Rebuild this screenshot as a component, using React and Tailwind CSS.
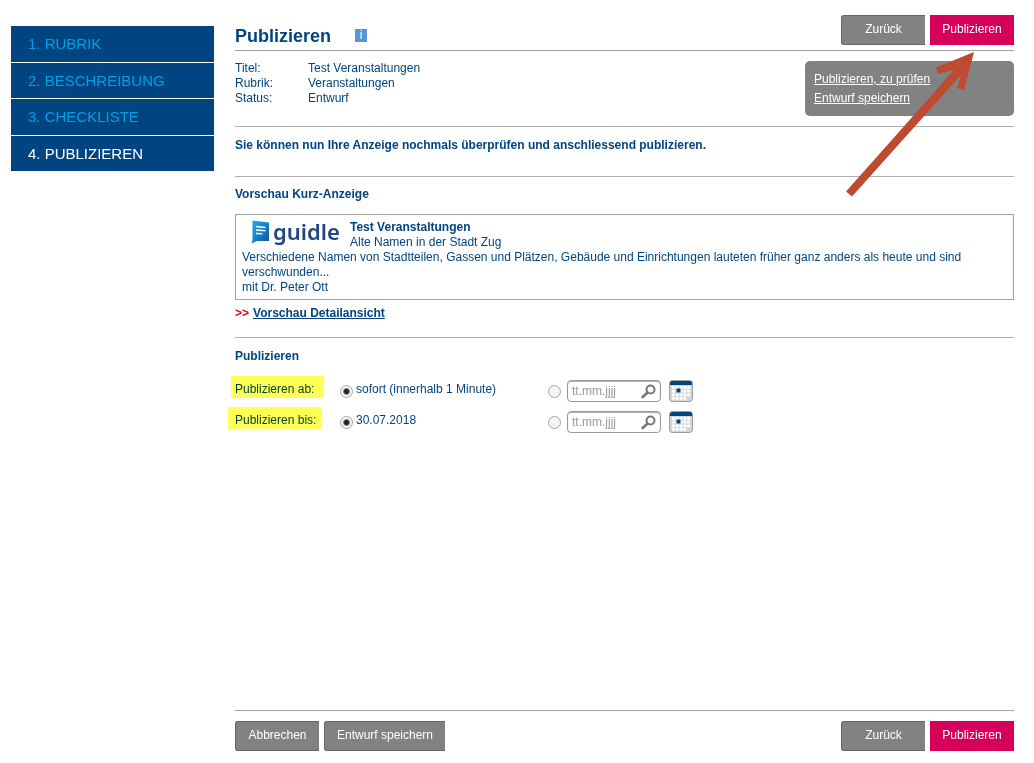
import { useState } from 'react'

const STEPS = ['1. RUBRIK', '2. BESCHREIBUNG', '3. CHECKLISTE', '4. PUBLIZIEREN']
const ACTIVE_STEP = 3

const DETAILS = [
  { label: 'Titel:', value: 'Test Veranstaltungen' },
  { label: 'Rubrik:', value: 'Veranstaltungen' },
  { label: 'Status:', value: 'Entwurf' },
]

function Button({ primary, wide, children }) {
  return (
    <button
      type="button"
      className={`h-[30px] pb-[2px] text-center text-white ${wide ? 'w-[121px]' : 'w-[84px]'} ${
        primary
          ? 'bg-[#d6005b]'
          : 'bg-[#828282] border border-r-0 border-[#666] rounded-l-[3px]'
      }`}
    >
      {children}
    </button>
  )
}

function GuidleLogo() {
  return (
    <div className="flex items-start gap-[3px] h-[29px] pl-[9px] w-[100px]">
      <svg className="w-[19px] h-[24px] shrink-0" viewBox="0 0 19 24" aria-hidden="true">
        <defs>
          <linearGradient id="bubble" x1="0" y1="0" x2="1" y2="1">
            <stop offset="0" stopColor="#1fb0ea" />
            <stop offset="0.500" stopColor="#1484cc" />
            <stop offset="1" stopColor="#164b94" />
          </linearGradient>
        </defs>
        <path d="M1.500 0.500 L18 2.500 V21 H6 L0.500 23.500 L1.500 20 Z" fill="url(#bubble)" />
        <path d="M5 6.500 L14.500 7.500 M5 10 L14.500 10.700 M5 13.500 L11.500 13.800" stroke="#fff" strokeWidth="1.400" />
      </svg>
      <span className="font-['Noto_Sans',sans-serif] font-semibold text-[22px] leading-[22px] text-[#20477f]">
        guidle
      </span>
    </div>
  )
}

function SearchIcon() {
  return (
    <svg className="w-[15px] h-[15px]" viewBox="0 0 15 15" fill="none" stroke="#777" aria-hidden="true">
      <circle cx="9.500" cy="5.500" r="4" strokeWidth="2" />
      <path d="M6.300 8.700 L1.700 13" strokeWidth="2.600" strokeLinecap="round" />
    </svg>
  )
}

function CalendarIcon() {
  return (
    <svg className="w-[24px] h-[22px]" viewBox="0 0 24 22" aria-hidden="true">
      <rect x="0.500" y="0.500" width="23" height="21" rx="3" fill="#d2d6da" stroke="#9b9b9b" />
      <path d="M1 5 V3 Q1 1 3 1 H21 Q23 1 23 3 V5 Z" fill="#004481" />
      <path
        d="M3 7.500 H21.500 M3 11.200 H21.500 M3 14.900 H21.500 M3 18.300 H17"
        stroke="#fff"
        strokeWidth="2.800"
        strokeDasharray="2.900 0.900"
      />
      <rect x="7.500" y="8.500" width="4" height="4" fill="#004481" />
    </svg>
  )
}

function Radio({ id, name, checked, onChange, label }) {
  return (
    <input
      type="radio"
      id={id}
      name={name}
      checked={checked}
      onChange={onChange}
      aria-label={label}
      className="appearance-none shrink-0 w-[13px] h-[13px] rounded-full border border-[#a6a6a6] bg-[#f4f4f4] checked:bg-[radial-gradient(circle,#222_0_2px,#f4f4f4_4px)]"
    />
  )
}

function PublishRow({ name, label, option, marker }) {
  const [mode, setMode] = useState('default')
  const [date, setDate] = useState('')

  return (
    <div role="radiogroup" aria-label={label} className="flex items-center h-[22px]">
      <div className="relative w-[105px] shrink-0 pb-1">
        {label}
        <span className={`absolute -top-[6px] h-[22px] w-[93px] bg-[#ff5] mix-blend-multiply ${marker}`} />
      </div>
      <div className="flex items-center gap-[3px] w-[208px] shrink-0">
        <Radio id={`${name}-default`} name={name} checked={mode === 'default'} onChange={() => setMode('default')} />
        <label htmlFor={`${name}-default`} className="pb-1">{option}</label>
      </div>
      <Radio
        name={name}
        checked={mode === 'date'}
        onChange={() => setMode('date')}
        label={`${label} Datum`}
      />
      <div className="flex items-center w-[94px] h-[22px] ml-[6px] px-1 border border-[#9a9a9a] rounded-[4px] shadow-[inset_0_1px_1px_#aaa]">
        <input
          type="text"
          value={date}
          onChange={(e) => setDate(e.target.value)}
          placeholder="tt.mm.jjjj"
          aria-label={`${label} Datum eingeben`}
          className="flex-1 min-w-0 outline-none placeholder:text-[#999]"
        />
        <SearchIcon />
      </div>
      <button type="button" aria-label="Kalender öffnen" className="ml-2">
        <CalendarIcon />
      </button>
    </div>
  )
}

export default function App() {
  return (
    <div className="flex gap-[21px] min-h-screen bg-white pl-[11px] pr-5 font-['Liberation_Sans',Arial,sans-serif] text-[12px] leading-[15px] text-[#004481]">
      <nav className="flex flex-col gap-px w-[203px] h-[145px] mt-[26px] shrink-0">
        {STEPS.map((step, i) => (
          <a
            key={step}
            href="#"
            className={`flex flex-1 items-center pl-[17px] text-[15px] bg-[#004481] ${
              i === ACTIVE_STEP ? 'text-white' : 'text-[#00a0e1]'
            }`}
          >
            {step}
          </a>
        ))}
      </nav>

      <main className="relative flex flex-col flex-1 min-w-0 pt-[15px] pb-3">
        <header className="flex items-start h-[36px] border-b border-[#a0a0a0]">
          <h1 className="mt-[10px] text-[18px] leading-[22px] font-bold">Publizieren</h1>
          <span className="flex items-center justify-center w-[12px] h-[13px] mt-[14px] ml-6 bg-[#5596d8] text-white">
            i
          </span>
          <div className="flex gap-[5px] ml-auto">
            <Button>Zurück</Button>
            <Button primary>Publizieren</Button>
          </div>
        </header>

        <section className="flex justify-between items-start h-[76px] pt-[10px] border-b border-[#b0b0b0]">
          <dl className="grid grid-cols-[73px_auto]">
            {DETAILS.map((d) => (
              <div key={d.label} className="contents">
                <dt>{d.label}</dt>
                <dd>{d.value}</dd>
              </div>
            ))}
          </dl>
          <div className="flex flex-col items-start w-[209px] h-[55px] pl-[9px] pt-[11px] gap-1 rounded-[5px] bg-[#828282] text-white underline">
            <a href="#">Publizieren, zu prüfen</a>
            <a href="#">Entwurf speichern</a>
          </div>
        </section>

        <p className="h-[50px] pt-[11px] font-bold border-b border-[#b0b0b0]">
          Sie können nun Ihre Anzeige nochmals überprüfen und anschliessend publizieren.
        </p>

        <section className="pt-[10px] pb-4 border-b border-[#b0b0b0]">
          <h2 className="font-bold">Vorschau Kurz-Anzeige</h2>
          <article className="mt-3 px-[6px] pt-[5px] pb-1 border border-[#a0a0a0]">
            <div className="flex gap-2">
              <GuidleLogo />
              <div>
                <h3 className="font-bold">Test Veranstaltungen</h3>
                <p>Alte Namen in der Stadt Zug</p>
              </div>
            </div>
            <p>
              Verschiedene Namen von Stadtteilen, Gassen und Plätzen, Gebäude und Einrichtungen
              lauteten früher ganz anders als heute und sind verschwunden...
            </p>
            <p>mit Dr. Peter Ott</p>
          </article>
          <p className="mt-[6px] font-bold">
            <span className="mr-1 text-[#e2001a]">&gt;&gt;</span>
            <a href="#" className="underline">Vorschau Detailansicht</a>
          </p>
        </section>

        <section className="pt-[11px]">
          <h2 className="font-bold">Publizieren</h2>
          <div className="flex flex-col gap-[9px] mt-4">
            <PublishRow name="ab" label="Publizieren ab:" option="sofort (innerhalb 1 Minute)" marker="-left-1" />
            <PublishRow name="bis" label="Publizieren bis:" option="30.07.2018" marker="-left-[7px]" />
          </div>
        </section>

        <footer className="flex gap-[5px] mt-auto pt-[10px] border-t border-[#a0a0a0]">
          <Button>Abbrechen</Button>
          <Button wide>Entwurf speichern</Button>
          <div className="flex gap-[5px] ml-auto">
            <Button>Zurück</Button>
            <Button primary>Publizieren</Button>
          </div>
        </footer>

        {/* Arrow pointing at the publish button */}
        <svg
          className="absolute top-[51px] right-[39px] w-[130px] h-[146px] pointer-events-none"
          viewBox="0 0 130 146"
          aria-hidden="true"
        >
          <path d="M129 1 L91 16.500 L93 23 L109 19 L1 140.500 L7 145.500 L116 24 L112 37 L119 39.500 Z" fill="#bf4a32" />
        </svg>
      </main>
    </div>
  )
}
